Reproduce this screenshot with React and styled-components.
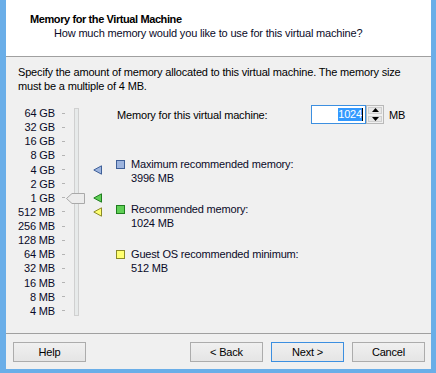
import React from 'react';
import styled, { createGlobalStyle } from 'styled-components';

const GlobalStyle = createGlobalStyle`
  html, body {
    margin: 0;
    padding: 0;
    background: #6aaee8;
  }
  * {
    box-sizing: border-box;
  }
`

const sizes = ['64 GB', '32 GB', '16 GB', '8 GB', '4 GB', '2 GB', '1 GB', '512 MB', '256 MB', '128 MB', '64 MB', '32 MB', '16 MB', '8 MB', '4 MB']

const markers = {
  '4 GB': 'max',
  '1 GB': 'rec',
  '512 MB': 'min'
}

const palette = {
  max: { fill: '#9db4de', stroke: '#3e5f98' },
  rec: { fill: '#5fcf55', stroke: '#1f7d1f' },
  min: { fill: '#ffff70', stroke: '#8a8a28' }
}

const legend = [
  { kind: 'max', title: 'Maximum recommended memory:', value: '3996 MB' },
  { kind: 'rec', title: 'Recommended memory:', value: '1024 MB' },
  { kind: 'min', title: 'Guest OS recommended minimum:', value: '512 MB' }
]

const Marker = ({ kind }) => {
  const c = palette[kind]
  return (
    <svg width="10" height="10" viewBox="0 0 10 10">
      <path d="M0.8 5 L8.5 0.8 L8.5 9.2 Z" fill={c.fill} stroke={c.stroke} strokeWidth="1" strokeLinejoin="round" />
    </svg>
  )
}

const Thumb = () => (
  <ThumbShape width="19" height="11" viewBox="0 0 19 11">
    <path d="M0.5 5.5 L6 0.5 L18.5 0.5 L18.5 10.5 L6 10.5 Z" fill="#ececec" stroke="#a9a9a9" strokeWidth="1" />
  </ThumbShape>
)

const Arrow = ({ up }) => (
  <svg width="7" height="4" viewBox="0 0 7 4">
    <path d={up ? 'M0 4 L3.5 0 L7 4 Z' : 'M0 0 L7 0 L3.5 4 Z'} fill="#000" />
  </svg>
)

const App = () => {
  return (
    <Frame>
      <GlobalStyle />
      <Panel>
        <Header>
          <Title>Memory for the Virtual Machine</Title>
          <Subtitle>How much memory would you like to use for this virtual machine?</Subtitle>
        </Header>
        <Body>
          <Description>
            Specify the amount of memory allocated to this virtual machine. The memory size
            must be a multiple of 4 MB.
          </Description>
          <Content>
            <Scale>
              <Labels>
                {sizes.map(s => <Label key={s}>{s}</Label>)}
              </Labels>
              <Ticks>
                {sizes.map(s => <TickRow key={s}><Tick /></TickRow>)}
              </Ticks>
              <Track>
                <Thumb />
              </Track>
              <Markers>
                {sizes.map(s => (
                  <MarkerRow key={s}>{markers[s] && <Marker kind={markers[s]} />}</MarkerRow>
                ))}
              </Markers>
            </Scale>
            <Details>
              <MemoryRow>
                <MemoryLabel>Memory for this virtual machine:</MemoryLabel>
                <Spin>
                  <SpinInput>
                    <Selected>1024</Selected>
                    <Caret />
                  </SpinInput>
                  <SpinButtons>
                    <SpinButton><Arrow up /></SpinButton>
                    <SpinButton><Arrow /></SpinButton>
                  </SpinButtons>
                </Spin>
                <Unit>MB</Unit>
              </MemoryRow>
              <Legend>
                {legend.map(item => (
                  <LegendItem key={item.kind}>
                    <Swatch kind={item.kind} />
                    <LegendText>
                      <div>{item.title}</div>
                      <div>{item.value}</div>
                    </LegendText>
                  </LegendItem>
                ))}
              </Legend>
            </Details>
          </Content>
        </Body>
        <Footer>
          <Button>Help</Button>
          <Spacer />
          <ButtonGroup>
            <Button>&lt; Back</Button>
            <Button primary>Next &gt;</Button>
            <Button>Cancel</Button>
          </ButtonGroup>
        </Footer>
      </Panel>
    </Frame>
  )
}

const Frame = styled.div`
  width: 436px;
  height: 373px;
  padding: 0 5px 4px 6px;
  background: #6aaee8;
  font-family: "Liberation Sans", Arial, sans-serif;
  font-size: 11px;
  line-height: 14px;
  letter-spacing: -0.17px;
  color: #000;
`

const Panel = styled.div`
  display: flex;
  flex-direction: column;
  height: 100%;
  background: #f0f0f0;
`

const Header = styled.div`
  height: 57px;
  padding: 12px 0 0 24px;
  background: #fff;
  border-bottom: 1px solid #a0a0a0;
`

const Title = styled.div`
  font-weight: bold;
  letter-spacing: -0.4px;
`

const Subtitle = styled.div`
  padding-left: 24px;
  color: #0a0a28;
`

const Body = styled.div`
  flex: 1;
  padding: 8px 0 0 12px;
`

const Description = styled.div`
  width: 400px;
`

const Content = styled.div`
  display: flex;
  margin-top: 13px;
`

const Scale = styled.div`
  display: flex;
  align-items: flex-start;
`

const Labels = styled.div`
  display: grid;
  grid-auto-rows: 14.14px;
  width: 35px;
`

const Label = styled.div`
  text-align: right;
  white-space: nowrap;
  line-height: 14px;
  color: #0a0a28;
`

const Ticks = styled.div`
  display: grid;
  grid-auto-rows: 14.14px;
  margin-left: 9px;
`

const TickRow = styled.div`
  display: flex;
  align-items: center;
`

const Tick = styled.div`
  width: 3px;
  height: 1px;
  background: #b4b4b4;
`

const Track = styled.div`
  position: relative;
  width: 5px;
  height: 208px;
  margin: 2px 0 0 9px;
  background: #e7eaea;
  border: 1px solid #d0d0d0;
`

const ThumbShape = styled.svg`
  position: absolute;
  left: -9px;
  top: 84px;
`

const Markers = styled.div`
  display: grid;
  grid-auto-rows: 14.14px;
  width: 10px;
  margin-left: 14px;
`

const MarkerRow = styled.div`
  display: flex;
  align-items: center;
`

const Details = styled.div`
  display: flex;
  flex-direction: column;
  margin-left: 13px;
  flex: 1;
`

const MemoryRow = styled.div`
  display: flex;
  align-items: center;
  height: 19px;
  margin-top: -1px;
  padding-left: 1px;
`

const MemoryLabel = styled.div`
  width: 194px;
`

const Spin = styled.div`
  display: flex;
  height: 19px;
`

const SpinInput = styled.div`
  display: flex;
  align-items: center;
  justify-content: flex-end;
  width: 55px;
  height: 19px;
  padding-right: 2px;
  background: #fff;
  border: 1px solid #3c8fe0;
`

const Selected = styled.span`
  background: #3399ff;
  color: #fff;
  line-height: 13px;
`

const Caret = styled.span`
  width: 1px;
  height: 13px;
  background: #000;
`

const SpinButtons = styled.div`
  display: flex;
  flex-direction: column;
  width: 18px;
  height: 19px;
  border: 1px solid #b9b9b9;
  background: #f0f0f0;
`

const SpinButton = styled.div`
  flex: 1;
  display: flex;
  align-items: center;
  justify-content: center;
  margin: 1px;
  background: #e6e6e6;
  border: 1px solid #cfcfcf;
`

const Unit = styled.div`
  margin-left: 5px;
`

const Legend = styled.div`
  display: flex;
  flex-direction: column;
  gap: 17px;
  margin-top: 33px;
`

const LegendItem = styled.div`
  display: flex;
  align-items: flex-start;
  gap: 6px;
`

const Swatch = styled.div`
  width: 9px;
  height: 9px;
  margin-top: 3px;
  background: ${p => palette[p.kind].fill};
  border: 1px solid ${p => palette[p.kind].stroke};
`

const LegendText = styled.div`
  color: #0a0a28;
`

const Footer = styled.div`
  display: flex;
  align-items: center;
  height: 36px;
  padding: 0 6px 0 7px;
  border-top: 1px solid #a0a0a0;
`

const Spacer = styled.div`
  flex: 1;
`

const ButtonGroup = styled.div`
  display: flex;
  gap: 8px;
`

const Button = styled.button`
  width: 73px;
  height: 20px;
  padding: 0;
  font-family: inherit;
  font-size: 11px;
  letter-spacing: inherit;
  color: #000;
  background: linear-gradient(#f0f0f0, #e5e5e5);
  border: 1px solid ${p => (p.primary ? '#3c8fe0' : '#acacac')};
  border-radius: 0;
`

export default App
